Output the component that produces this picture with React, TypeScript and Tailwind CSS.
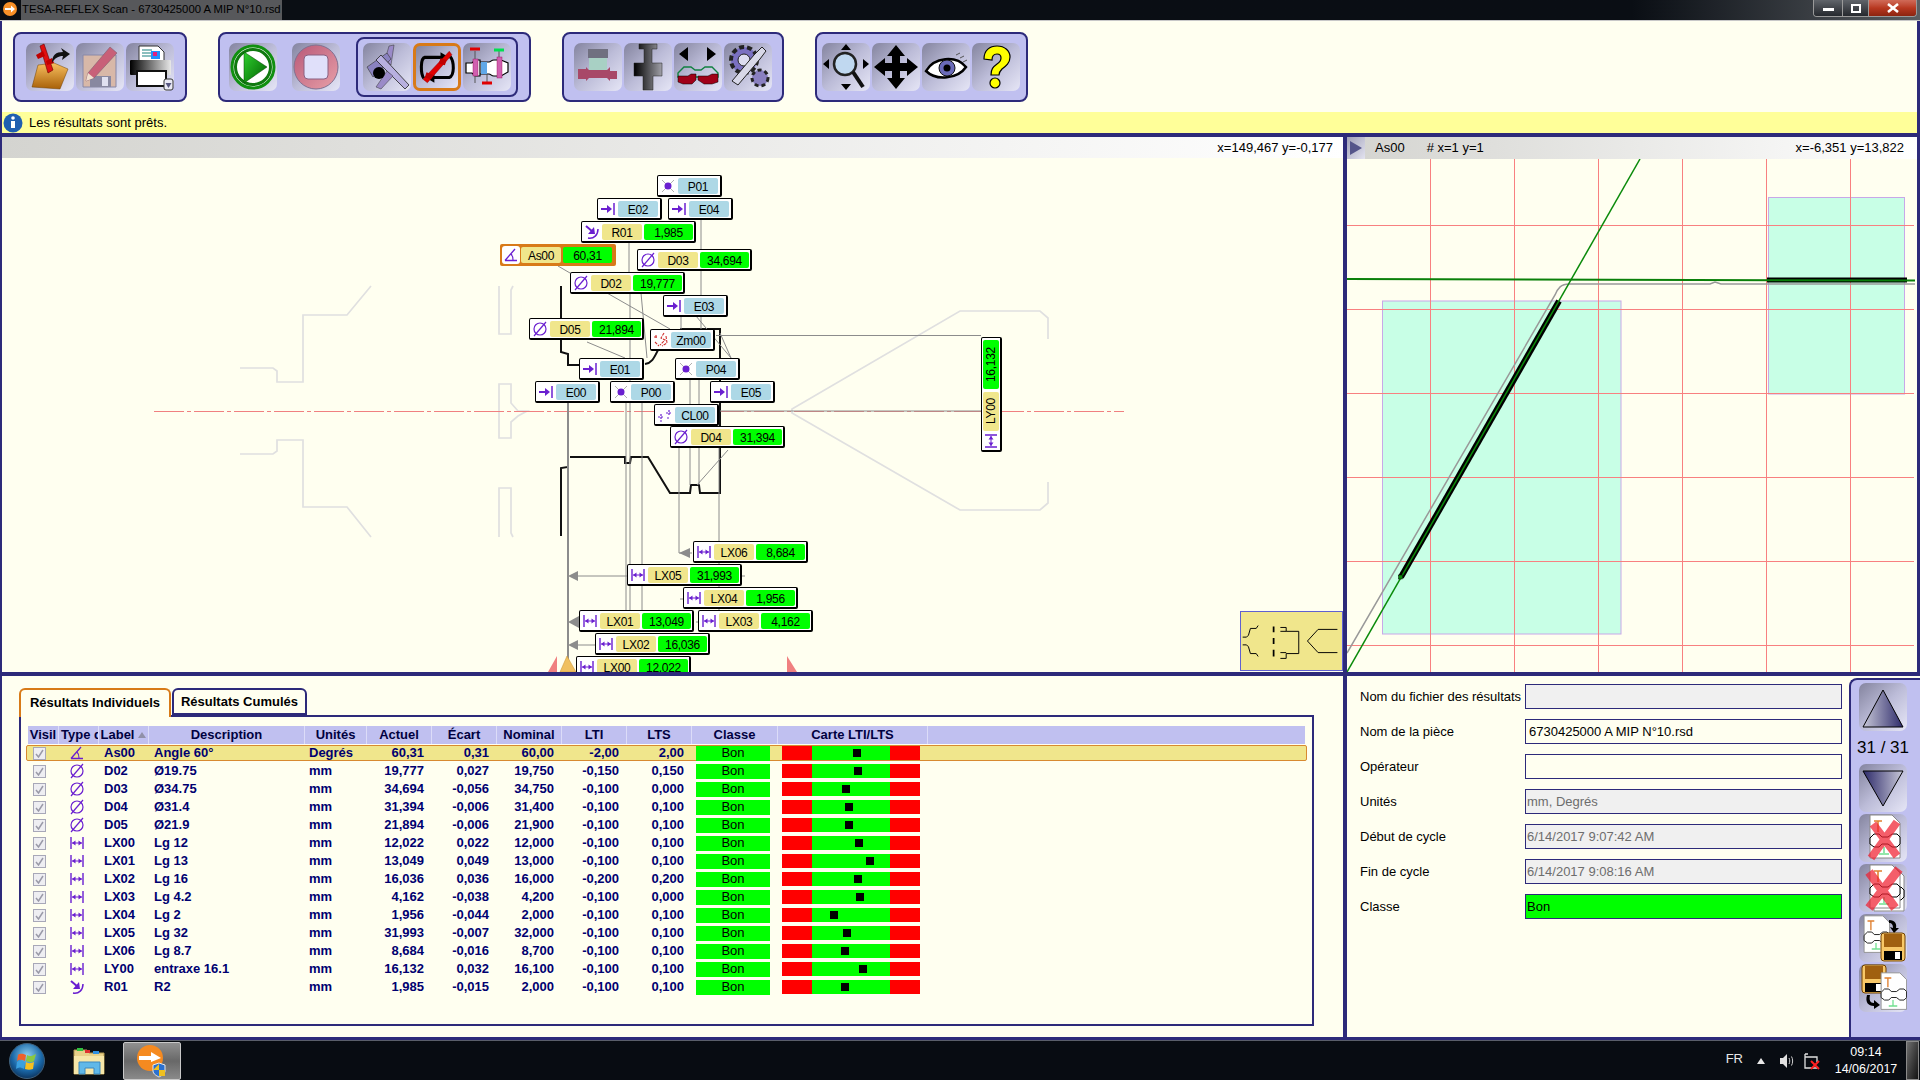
import React from "react";

const navy = "border-[#2d2a7a]";
const btn = "flex h-[48px] w-[48px] flex-none items-center justify-center rounded-[7px] bg-linear-to-br from-[#84849f] via-[#bcbcd8] to-[#e6e6f6]";

type IconKind = "edge" | "pt" | "dia" | "len" | "arc" | "ang" | "zone" | "cl";

function MeasureIcon({ kind, size = 16 }: { kind: IconKind; size?: number }) {
   const c = "#6a1fd0";
   return (
      <svg width={size} height={size} viewBox="0 0 16 16" fill="none">
         {kind === "edge" && (
            <>
               <path d="M1 8H8" stroke={c} strokeWidth="2" />
               <path d="M7 4L12 8L7 12Z" fill={c} />
               <path d="M14 2V14" stroke={c} strokeWidth="1.5" />
            </>
         )}
         {kind === "pt" && (
            <>
               <path d="M2 2L14 14M14 2L2 14" stroke="#b0b0b0" strokeWidth="1" />
               <circle cx="8" cy="8" r="3.5" fill={c} />
            </>
         )}
         {kind === "dia" && (
            <>
               <circle cx="8" cy="8" r="6" stroke={c} strokeWidth="1.2" />
               <path d="M2 15L14 1" stroke={c} strokeWidth="1.2" />
            </>
         )}
         {kind === "len" && (
            <>
               <path d="M2 2V14M14 2V14" stroke={c} strokeWidth="1.4" />
               <path d="M3 8H13" stroke={c} strokeWidth="1" />
               <path d="M3 8L6.5 5.5V10.5Z M13 8L9.5 5.5V10.5Z" fill={c} />
            </>
         )}
         {kind === "arc" && (
            <>
               <path d="M2 2L9 8" stroke={c} strokeWidth="2" />
               <path d="M4 10L11 10L10 3Z" fill={c} />
               <path d="M4 14C10 15 14 11 14 5" stroke={c} strokeWidth="1.5" />
            </>
         )}
         {kind === "ang" && (
            <>
               <path d="M2 13.5H14M2 13.5L12 2" stroke={c} strokeWidth="1.3" />
               <path d="M8 7C10 9 10 11 10 13" stroke={c} strokeWidth="1.1" />
            </>
         )}
         {kind === "zone" && (
            <path d="M1 5H5M3 3V7M11 1L8 6L12 8L7 13M13 4L14 11L9 14M2 10L6 14" stroke="#d03030" strokeWidth="1.1" strokeDasharray="3 1" />
         )}
         {kind === "cl" && (
            <path d="M1 10H7M4 7V13M9 6H15M12 3V9M3 14H6M10 11H13" stroke={c} strokeWidth="1.2" strokeDasharray="2 1" />
         )}
      </svg>
   );
}

const tags: { pos: string; name: string; value?: string; icon: IconKind; sel?: boolean }[] = [
   { pos: "left-[655px] top-[17px]", name: "P01", icon: "pt" },
   { pos: "left-[595px] top-[40px]", name: "E02", icon: "edge" },
   { pos: "left-[666px] top-[40px]", name: "E04", icon: "edge" },
   { pos: "left-[579px] top-[63px]", name: "R01", value: "1,985", icon: "arc" },
   { pos: "left-[498px] top-[86px]", name: "As00", value: "60,31", icon: "ang", sel: true },
   { pos: "left-[635px] top-[91px]", name: "D03", value: "34,694", icon: "dia" },
   { pos: "left-[568px] top-[114px]", name: "D02", value: "19,777", icon: "dia" },
   { pos: "left-[661px] top-[137px]", name: "E03", icon: "edge" },
   { pos: "left-[527px] top-[160px]", name: "D05", value: "21,894", icon: "dia" },
   { pos: "left-[648px] top-[171px]", name: "Zm00", icon: "zone" },
   { pos: "left-[577px] top-[200px]", name: "E01", icon: "edge" },
   { pos: "left-[673px] top-[200px]", name: "P04", icon: "pt" },
   { pos: "left-[533px] top-[223px]", name: "E00", icon: "edge" },
   { pos: "left-[608px] top-[223px]", name: "P00", icon: "pt" },
   { pos: "left-[708px] top-[223px]", name: "E05", icon: "edge" },
   { pos: "left-[652px] top-[246px]", name: "CL00", icon: "cl" },
   { pos: "left-[668px] top-[268px]", name: "D04", value: "31,394", icon: "dia" },
   { pos: "left-[691px] top-[383px]", name: "LX06", value: "8,684", icon: "len" },
   { pos: "left-[625px] top-[406px]", name: "LX05", value: "31,993", icon: "len" },
   { pos: "left-[681px] top-[429px]", name: "LX04", value: "1,956", icon: "len" },
   { pos: "left-[577px] top-[452px]", name: "LX01", value: "13,049", icon: "len" },
   { pos: "left-[696px] top-[452px]", name: "LX03", value: "4,162", icon: "len" },
   { pos: "left-[593px] top-[475px]", name: "LX02", value: "16,036", icon: "len" },
   { pos: "left-[574px] top-[498px]", name: "LX00", value: "12,022", icon: "len" },
];

const rows = [
   ["As00", "Angle 60°", "Degrés", "60,31", "0,31", "60,00", "-2,00", "2,00", "ang", 71],
   ["D02", "Ø19.75", "mm", "19,777", "0,027", "19,750", "-0,150", "0,150", "dia", 72],
   ["D03", "Ø34.75", "mm", "34,694", "-0,056", "34,750", "-0,100", "0,000", "dia", 60],
   ["D04", "Ø31.4", "mm", "31,394", "-0,006", "31,400", "-0,100", "0,100", "dia", 63],
   ["D05", "Ø21.9", "mm", "21,894", "-0,006", "21,900", "-0,100", "0,100", "dia", 63],
   ["LX00", "Lg 12", "mm", "12,022", "0,022", "12,000", "-0,100", "0,100", "len", 73],
   ["LX01", "Lg 13", "mm", "13,049", "0,049", "13,000", "-0,100", "0,100", "len", 84],
   ["LX02", "Lg 16", "mm", "16,036", "0,036", "16,000", "-0,200", "0,200", "len", 72],
   ["LX03", "Lg 4.2", "mm", "4,162", "-0,038", "4,200", "-0,100", "0,000", "len", 74],
   ["LX04", "Lg 2", "mm", "1,956", "-0,044", "2,000", "-0,100", "0,100", "len", 48],
   ["LX05", "Lg 32", "mm", "31,993", "-0,007", "32,000", "-0,100", "0,100", "len", 61],
   ["LX06", "Lg 8.7", "mm", "8,684", "-0,016", "8,700", "-0,100", "0,100", "len", 59],
   ["LY00", "entraxe 16.1", "mm", "16,132", "0,032", "16,100", "-0,100", "0,100", "len", 77],
   ["R01", "R2", "mm", "1,985", "-0,015", "2,000", "-0,100", "0,100", "arc", 59],
] as const;

const cols = "grid grid-cols-[31px_40px_50px_156px_62px_65px_65px_65px_65px_65px_86px_150px_1fr]";

const fields = [
   { label: "Nom du fichier des résultats", value: "", box: "bg-[#f0f0f0] text-[#6d6d6d]" },
   { label: "Nom de la pièce", value: "6730425000 A MIP N°10.rsd", box: "bg-[#fffff0] text-black pl-[3px]" },
   { label: "Opérateur", value: "", box: "bg-[#fffff0] text-black" },
   { label: "Unités", value: "mm, Degrés", box: "bg-[#f0f0f0] text-[#6d6d6d]" },
   { label: "Début de cycle", value: "6/14/2017 9:07:42 AM", box: "bg-[#f0f0f0] text-[#6d6d6d]" },
   { label: "Fin de cycle", value: "6/14/2017 9:08:16 AM", box: "bg-[#f0f0f0] text-[#6d6d6d]" },
   { label: "Classe", value: "Bon", box: "bg-[#00ff00] text-black" },
];

function Tag({ pos, name, value, icon, sel }: (typeof tags)[number]) {
   return (
      <div
         className={`absolute flex h-[22px] items-center rounded-[2px] ${pos} ${
            sel ? "bg-[#d87a18] pl-[2px] pr-[4px]" : "border border-r-2 border-b-2 border-black bg-white pl-[1px] pt-[1px]"
         } ${!sel && value ? "pr-[1px]" : ""} ${!sel && !value ? "pr-[2px]" : ""}`}
      >
         <div className={`flex h-[18px] w-[18px] items-center justify-center rounded-[3px] ${sel ? "bg-white" : ""}`}>
            <MeasureIcon kind={icon} />
         </div>
         <div
            className={`ml-[1px] flex h-[16px] w-[40px] items-center justify-center rounded-[2px] pt-[1px] ${
               value ? "bg-[#f0e68c]" : "bg-[#add8e6]"
            }`}
         >
            {name}
         </div>
         {value && (
            <div className="ml-[2px] flex h-[16px] w-[49px] items-center justify-center rounded-[2px] bg-[#00ff00] pt-[1px]">{value}</div>
         )}
      </div>
   );
}

function Drawing() {
   return (
      <svg className="absolute inset-0 h-full w-full" viewBox="2 158 1341 514" fill="none">
         {/* ghost profile */}
         <g stroke="#e0e0e0" strokeWidth="1.7">
            <path d="M240 368H273L277 371V382H303V315H347L371 286" />
            <path d="M240 454H273L277 451V440H303V507H347L371 537" />
            <path d="M499 286V334H511V290L513 286" />
            <path d="M513 537L511 533V488H499V537" />
            <path d="M499 384H511V403L518 411H527L518 416L511 422V438H499Z" />
            <path d="M1048 339V318L1040 311H960L792 409V413L960 510H1040L1048 503V482" />
         </g>
         <path d="M154 411.5H1124" stroke="#f08080" strokeWidth="1" strokeDasharray="30 3 4 3" />
         {/* black profile */}
         <g stroke="#111" strokeWidth="2">
            <path d="M561 286V352L568 354V365H579" />
            <path d="M645 364C652 363 654 358 658 350" />
            <path d="M680 329H720V493H700L699 485H691L690 493H670L648 457H631L630 463H625L625 457H570" />
            <path d="M561 536V468L568 467V457" />
         </g>
         {/* construction lines */}
         <g stroke="#8c8c8c" strokeWidth="1">
            <path d="M568 403V672" strokeWidth="2" />
            <path d="M626 403V610M630 293V610M642 403V610M679 448V553H692M690 380V485M699 380V485M719 448V610M701 220V295" />
            <path d="M629 243V272M701 316V329" />
            <path d="M641 293L647 358M607 293L670 329M587 342L625 358M558 266L570 273M696 316L731 358M720 333L731 358M681 316V329M728 450L697 485" />
            <path d="M716 335.5H981M720 411H981" />
            <path d="M578 576H627M578 622H579M578 645H595M683 599H680M698 622H696M742 576H745" />
         </g>
         <g fill="#8c8c8c">
            <path d="M568 576L578 571V581Z" />
            <path d="M568 622L579 616V628Z" />
            <path d="M568 645L578 640V650Z" />
            <path d="M679 553L690 548V558Z" />
         </g>
         <path d="M548 672L557 656V672Z" fill="#f08080" />
         <path d="M560 672L567 656L576 672Z" fill="#f0c060" stroke="#c89030" strokeWidth="0.5" />
         <path d="M787 656V672H797Z" fill="#f08080" />
      </svg>
   );
}

function Plot() {
   return (
      <svg className="h-full w-full" viewBox="1347 159 570 513" fill="none">
         <rect x="1382.5" y="301" width="238.5" height="333" fill="#c8ffe6" stroke="#c8a8e8" />
         <rect x="1768.5" y="197.5" width="136" height="196.5" fill="#c8ffe6" stroke="#c8a8e8" />
         <g stroke="#f88080" strokeWidth="1">
            <path d="M1430.5 159V672M1514.5 159V672M1598.5 159V672M1682.5 159V672M1766.5 159V672M1850.5 159V672" />
            <path d="M1347 225.5H1914M1347 309.5H1914M1347 393.5H1914M1347 477.5H1914M1347 561.5H1914M1347 645.5H1914" />
         </g>
         <path d="M1347 653L1555 295C1558 288 1561 284 1569 284H1710L1715 282L1721 284H1915" stroke="#999" strokeWidth="1.5" />
         <path d="M1401 577L1559 301" stroke="#000" strokeWidth="6" />
         <path d="M1767 280H1907" stroke="#000" strokeWidth="5" />
         <path d="M1347 672L1640 159" stroke="#0a8a0a" strokeWidth="1.5" />
         <path d="M1347 279L1915 280.5" stroke="#0a800a" strokeWidth="2" />
         <rect x="1398.5" y="575" width="4" height="4" fill="#0a8a0a" stroke="#000" strokeWidth="0.5" />
      </svg>
   );
}

const g = (id: string, a: string, b: string, x2 = 0, y2 = 1) => (
   <linearGradient id={id} x1="0" y1="0" x2={x2} y2={y2}>
      <stop offset="0" stopColor={a} />
      <stop offset="1" stopColor={b} />
   </linearGradient>
);

function Tool({ children }: { children: React.ReactNode }) {
   return (
      <svg width="48" height="48" viewBox="0 0 48 48" fill="none">
         {children}
      </svg>
   );
}

const OpenIcon = () => (
   <Tool>
      <defs>{g("fo", "#f8c060", "#a86008")}</defs>
      <path d="M12 22L28 20L42 26L34 46L6 44Z" fill="url(#fo)" stroke="#704000" strokeWidth="0.5" />
      <path d="M14 3L18 1L27 27L22 30Z" fill="#e01010" stroke="#600" strokeWidth="0.6" />
      <path d="M10 12L17 8L19 13L12 16Z M20 18L26 15L28 20L21 22Z" fill="#c00000" />
      <path d="M26 20C26 12 30 9 37 9L35 5L44 11L36 17L37 13C32 13 29 15 26 20Z" fill="#111" />
   </Tool>
);
const SaveEditIcon = () => (
   <Tool>
      <path d="M7 12H40V44H7Z" fill="#d8b8a8" stroke="#8888a8" />
      <path d="M14 33H35V44H14Z" fill="#8888a0" />
      <path d="M26 34H32V43H26Z" fill="#e0e0f0" />
      <path d="M12 30L34 4L41 10L18 35L10 38Z" fill="#c86078" stroke="#806070" strokeWidth="0.6" />
      <path d="M10 38L12 30L18 35Z" fill="#f0e0d0" />
   </Tool>
);
const PrintIcon = () => (
   <Tool>
      <defs>{g("pr", "#000000", "#e8e8e8", 1, 0)}</defs>
      <path d="M13 3H32L38 9V24H13Z" fill="#fff" stroke="#333" />
      <path d="M16 7H26M16 10H26M16 13H26" stroke="#6aa" strokeWidth="1.5" />
      <rect x="25" y="8" width="9" height="8" fill="#1e90ff" />
      <rect x="27" y="9" width="4" height="4" fill="#e02080" />
      <rect x="4" y="17" width="41" height="15" rx="1" fill="url(#pr)" />
      <rect x="11" y="28" width="29" height="15" fill="#fff" stroke="#111" strokeWidth="2" />
      <rect x="38" y="36" width="9" height="11" rx="2" fill="#e8e8f4" stroke="#333" />
      <path d="M39.5 40H45.5L42.5 45Z" fill="#555580" />
   </Tool>
);
const PlayIcon = () => (
   <Tool>
      <defs>{g("pl", "#30d030", "#006000", 1, 1)}</defs>
      <circle cx="24" cy="24" r="21" fill="#fff" stroke="#109010" strokeWidth="3" />
      <circle cx="24" cy="24" r="17.5" stroke="#107a10" strokeWidth="3" />
      <path d="M15 9L38 24L15 40Z" fill="url(#pl)" stroke="#004000" strokeWidth="0.5" />
   </Tool>
);
const StopIcon = () => (
   <Tool>
      <defs>{g("st", "#b85878", "#e8a0a8", 1, 1)}</defs>
      <circle cx="24" cy="24" r="22" fill="url(#st)" stroke="#807090" />
      <rect x="12" y="12" width="24" height="24" rx="4" fill="#e0e0fa" stroke="#8a6080" />
   </Tool>
);
const CaliperIcon = () => (
   <Tool>
      <path d="M26 3L31 2L28 22L22 17Z" fill="#9a8ac8" stroke="#333" strokeWidth="0.5" />
      <path d="M4 24L24 10L28 16L10 34Z" fill="#8a82c0" stroke="#333" strokeWidth="0.6" />
      <path d="M18 12L46 42L42 46L13 17Z" fill="#b8b0e0" stroke="#222" strokeWidth="0.8" />
      <path d="M24 28L13 44L18 46L30 33Z" fill="#9a8ac8" stroke="#333" strokeWidth="0.5" />
      <circle cx="16" cy="30" r="6" fill="#000" />
   </Tool>
);
const CycleIcon = () => (
   <Tool>
      <path d="M9 37C5 32 5 14 10 13H30" stroke="#000" strokeWidth="3.5" />
      <path d="M28 7L38 13L28 19Z" fill="#000" />
      <path d="M39 12C44 18 44 34 38 36H19" stroke="#000" strokeWidth="3.5" />
      <path d="M21 30L11 36L21 42Z" fill="#000" />
      <path d="M8 38L38 6L41 10L13 42Z" fill="#e00000" stroke="#800" strokeWidth="0.5" />
      <path d="M12 30L20 33L17 38L10 36Z M28 14L35 16L33 22L26 20Z" fill="#c00000" />
   </Tool>
);
const PartIcon = () => (
   <Tool>
      <path d="M3 20H9L12 17H17V33H12L9 30H3Z M17 19H26C28 19 28 17 31 17H38L45 20V29L38 33H31C28 33 28 31 26 31H17" fill="#fff" stroke="#000" strokeWidth="1.2" />
      <rect x="10" y="16" width="5" height="17" fill="#d060b0" stroke="#905" strokeWidth="0.4" />
      <rect x="18" y="19" width="6" height="12" fill="#60a8e8" />
      <rect x="34" y="14" width="5" height="21" fill="#d060b0" stroke="#905" strokeWidth="0.4" />
      <path d="M12 8V16M36 8V14M12 33V40M24 31V40" stroke="#555" strokeWidth="1" />
      <path d="M7 6H17" strokeWidth="3" stroke="#e00000" />
      <path d="M31 7H41" strokeWidth="3" stroke="#00e050" />
      <path d="M19 40H29" strokeWidth="3" stroke="#e00000" />
   </Tool>
);
const FeatureIcon = () => (
   <Tool>
      <rect x="14" y="6" width="20" height="9" fill="#707080" />
      <rect x="15" y="15" width="18" height="18" fill="#a8d0c4" />
      <path d="M4 26H12V24L15 27H33L36 24V28H43V36H36V38L33 35H15L12 38V36H4Z" fill="#a84868" />
   </Tool>
);
const ProbeIcon = () => (
   <Tool>
      <defs>{g("pb", "#000000", "#a0a0a8", 1, 0)}</defs>
      <path d="M15 1H33V6H28V20H38V33H29V47H19V33H10V20H20V6H15Z" fill="url(#pb)" stroke="#222" strokeWidth="0.5" />
   </Tool>
);
const MoveIcon = () => (
   <Tool>
      <path d="M5 11L14 4V18Z M42 11L33 4V18Z" fill="#000" />
      <path d="M4 30L10 24H17L21 27H27L31 24H38L44 30V34H4Z" stroke="#108040" strokeWidth="1.4" />
      <path d="M4 33H14L17 31H22V37L18 41H9L4 39Z M24 33H34L38 31H44V39L38 41H30L24 37Z" fill="#a00018" stroke="#000" strokeWidth="0.5" />
   </Tool>
);
const GearIcon = () => (
   <Tool>
      <circle cx="20" cy="17" r="13" fill="#7a70c0" stroke="#222" strokeWidth="4" strokeDasharray="5 3" />
      <circle cx="20" cy="17" r="6" fill="#dcdcf0" stroke="#222" />
      <circle cx="36" cy="35" r="8" fill="#8a80c0" stroke="#222" strokeWidth="3" strokeDasharray="4 3" />
      <path d="M38 4L42 8L36 16L14 42L8 38L30 12Z" fill="#d8d8e8" stroke="#222" />
   </Tool>
);
const ZoomIcon = () => (
   <Tool>
      <path d="M24 1L19 7H29Z M24 47L19 41H29Z M1 21L7 16V26Z" fill="#000" />
      <path d="M47 21L41 16V26Z" fill="#000" />
      <circle cx="23" cy="21" r="11" fill="#c0d8f0" stroke="#222" strokeWidth="2.5" />
      <path d="M31 29L41 44" stroke="#111" strokeWidth="4" />
   </Tool>
);
const PanIcon = () => (
   <Tool>
      <path d="M24 2L33 13H28V20H35V15L46 24L35 33V28H28V35H33L24 46L15 35H20V28H13V33L2 24L13 15V20H20V13H15Z" fill="#000" />
   </Tool>
);
const EyeIcon = () => (
   <Tool>
      <path d="M4 28C12 14 34 12 44 24C36 36 14 38 4 28Z" fill="#fff" stroke="#000" strokeWidth="2.5" />
      <circle cx="25" cy="25" r="8" fill="#6a6ab8" stroke="#111" />
      <circle cx="25" cy="25" r="3.5" fill="#000" />
      <path d="M34 12L38 10M38 15L42 13M41 19L45 17" stroke="#555" />
   </Tool>
);
const HelpIcon = () => (
   <Tool>
      <path d="M12 16C12 7 18 3 25 3C33 3 38 8 38 14C38 20 34 23 30 26C28 28 27 29 27 32H19C19 26 21 24 25 21C28 19 29 17 29 15C29 12 27 11 25 11C22 11 20 13 20 17Z" fill="#ffff00" stroke="#000" strokeWidth="1.2" />
      <circle cx="23" cy="40" r="5" fill="#ffff00" stroke="#000" strokeWidth="1.2" />
   </Tool>
);
const UpIcon = () => (
   <Tool>
      <defs>{g("tr", "#c8c8d8", "#2d2a6a", 1, 0)}</defs>
      <path d="M24 7L44 44H4Z" fill="url(#tr)" stroke="#000" strokeLinejoin="round" strokeWidth="1" />
   </Tool>
);
const DownIcon = () => (
   <Tool>
      <defs>{g("dn", "#2d2a6a", "#c8c8d8", 1, 0)}</defs>
      <path d="M4 7H44L24 42Z" fill="url(#dn)" stroke="#000" strokeLinejoin="round" strokeWidth="1" />
   </Tool>
);
const DocShape = ({ x = 0, y = 0, s = 1 }: { x?: number; y?: number; s?: number }) => (
   <g transform={`translate(${x} ${y}) scale(${s})`}>
      <path d="M6 1H28L36 9V44H6Z" fill="#fff" stroke="#888" />
      <path d="M10 7H18M14 7V18" stroke="#e08030" strokeWidth="1.6" />
      <path d="M6 24L10 20H15L18 23H24L28 20H33L36 23V30L33 33H28L24 30H18L15 33H10L6 30Z" fill="#fff" stroke="#000" />
      <path d="M20 33V39M15 40H25" stroke="#70e090" strokeWidth="1.5" />
   </g>
);
const DeleteDocIcon = () => (
   <Tool>
      <DocShape x={5} />
      <path d="M14 10L38 42M38 8L12 44" stroke="#f02030" strokeWidth="8" opacity="0.72" />
   </Tool>
);
const DeleteAllIcon = () => (
   <Tool>
      <DocShape x={9} y={3} />
      <DocShape x={5} />
      <path d="M10 8L36 44M40 5L10 44" stroke="#f02030" strokeWidth="9" opacity="0.72" />
   </Tool>
);
const Floppy = ({ x, y }: { x: number; y: number }) => (
   <g transform={`translate(${x} ${y})`}>
      <rect width="24" height="28" rx="3" fill="#f8c868" stroke="#704000" />
      <rect x="3" y="1" width="18" height="13" fill="#a06010" />
      <rect x="3" y="18" width="18" height="9" fill="#000" />
      <rect x="14" y="19" width="5" height="7" fill="#fff" />
   </g>
);
const SaveDocIcon = () => (
   <Tool>
      <DocShape x={0} y={1} s={0.85} />
      <path d="M30 6C36 6 38 10 37 14L40 14L35 19L31 13L34 14C34 11 33 9 30 9Z" fill="#000" />
      <Floppy x={22} y={19} />
   </Tool>
);
const LoadDocIcon = () => (
   <Tool>
      <Floppy x={3} y={1} />
      <DocShape x={17} y={8} s={0.85} />
      <path d="M8 31C6 38 9 42 15 42L15 45L21 41L15 36L15 39C11 39 10 36 11 31Z" fill="#000" />
   </Tool>
);

function Minimap() {
   return (
      <div className="absolute bottom-[1px] right-0 h-[60px] w-[103px] border border-[#6060d0] bg-[#f0e68c]">
         <svg className="h-full w-full" viewBox="0 0 103 60" fill="none" stroke="#000" strokeWidth="1">
            <path d="M1 26H5L7 24L9 17H15L17 14M1 34H5L7 36L9 43H15L17 46" />
            <path d="M33 15V21M33 27V33M33 39V46" strokeWidth="1.8" />
            <path d="M40 16H46V20H59V43H46V48H40M40 20H46M40 42H46" />
            <path d="M99 18H79L68 30L79 42H99" />
         </svg>
      </div>
   );
}

export default function App() {
   return (
      <div className="flex h-[1080px] w-[1920px] flex-col overflow-hidden bg-[#080c12] text-[13px] text-black [font-family:'Liberation_Sans',Arial,sans-serif]">
         {/* title bar */}
         <div className="flex h-[21px] flex-none items-start border-b border-[#c8c8c8] bg-linear-to-r from-[#0a0e14] from-85% to-[#5a5e62]">
            <svg className="ml-[2px] mt-[1px]" width="16" height="16" viewBox="0 0 16 16">
               <circle cx="8" cy="8" r="7" fill="#f89028" />
               <path d="M3 7H9V4.5L13 8L9 11.5V9H3Z" fill="#fff" />
            </svg>
            <div className="ml-[3px] h-[20px] bg-[#8a8a8a]/60 px-[1px] text-[11.3px] leading-[19px] text-black">
               TESA-REFLEX Scan - 6730425000 A MIP N°10.rsd
            </div>
            <div className="ml-auto mr-[3px] flex h-[17px] overflow-hidden rounded-b-[4px] border border-t-0 border-[#9a9a9a]">
               <div className="flex w-[29px] items-center justify-center border-r border-[#9a9a9a] bg-linear-to-b from-[#60646a] to-[#26292e]">
                  <div className="mt-[2px] h-[3px] w-[11px] bg-white" />
               </div>
               <div className="flex w-[26px] items-center justify-center border-r border-[#9a9a9a] bg-linear-to-b from-[#60646a] to-[#26292e]">
                  <div className="h-[9px] w-[10px] border-2 border-white" />
               </div>
               <div className="flex w-[47px] items-center justify-center bg-linear-to-b from-[#d06a58] via-[#b83820] to-[#8c2410]">
                  <svg width="12" height="10" viewBox="0 0 12 10">
                     <path d="M1 1L11 9M11 1L1 9" stroke="#fff" strokeWidth="2.6" />
                  </svg>
               </div>
            </div>
         </div>

         <div className={`flex min-h-0 flex-1 flex-col border-l-2 ${navy} bg-[#fffff0]`}>
            {/* toolbar */}
            <div className={`flex h-[91px] flex-none items-start gap-[31px] border-r-[3px] ${navy} pl-[11px] pt-[11px]`}>
               <div className={`flex h-[70px] items-center gap-[2px] rounded-[8px] border-2 ${navy} bg-[#c0c0f0] px-[11px]`}>
                  <div className={btn}><OpenIcon /></div>
                  <div className={btn}><SaveEditIcon /></div>
                  <div className={btn}><PrintIcon /></div>
               </div>
               <div className={`flex h-[70px] items-center rounded-[8px] border-2 ${navy} bg-[#c0c0f0] pl-[9px] pr-[11px]`}>
                  <div className={btn}><PlayIcon /></div>
                  <div className={`${btn} ml-[15px]`}><StopIcon /></div>
                  <div className={`ml-[16px] flex h-[60px] items-center gap-[2px] rounded-[8px] border-2 ${navy} px-[5px]`}>
                     <div className={btn}><CaliperIcon /></div>
                     <div className={`${btn} border-[3px] border-[#d87a18]`}><CycleIcon /></div>
                     <div className={btn}><PartIcon /></div>
                  </div>
               </div>
               <div className={`flex h-[70px] items-center gap-[2px] rounded-[8px] border-2 ${navy} bg-[#c0c0f0] px-[10px]`}>
                  <div className={btn}><FeatureIcon /></div>
                  <div className={btn}><ProbeIcon /></div>
                  <div className={btn}><MoveIcon /></div>
                  <div className={btn}><GearIcon /></div>
               </div>
               <div className={`flex h-[70px] items-center gap-[2px] rounded-[8px] border-2 ${navy} bg-[#c0c0f0] pl-[5px] pr-[6px]`}>
                  <div className={btn}><ZoomIcon /></div>
                  <div className={btn}><PanIcon /></div>
                  <div className={btn}><EyeIcon /></div>
                  <div className={btn}><HelpIcon /></div>
               </div>
            </div>

            {/* info bar */}
            <div className={`flex h-[25px] flex-none items-start border-b-4 border-r-[3px] ${navy} bg-[#ffff99]`}>
               <svg className="ml-[1px] mt-[1px]" width="20" height="20" viewBox="0 0 20 20">
                  <circle cx="10" cy="10" r="9.5" fill="#1f5fb0" />
                  <circle cx="10" cy="5" r="1.8" fill="#fff" />
                  <path d="M8 8H12V15H8Z" fill="#fff" />
               </svg>
               <span className="ml-[6px] leading-[21px]">Les résultats sont prêts.</span>
            </div>

            {/* diagram and plot */}
            <div className={`flex h-[539px] flex-none border-b-4 border-r-[3px] ${navy}`}>
               <div className="flex w-[1341px] flex-none flex-col">
                  <div className="flex h-[21px] flex-none items-center justify-end bg-linear-to-r from-[#d4d4d0] to-white pr-[10px]">
                     x=149,467 y=-0,177
                  </div>
                  <div className="relative min-h-0 flex-1 overflow-hidden text-[12px] tracking-[-0.3px]">
                     <Drawing />
                     {tags.map((t) => (
                        <Tag key={t.name} {...t} />
                     ))}
                     <div className="absolute left-[979px] top-[179px] flex h-[115px] w-[21px] flex-col items-center rounded-[2px] border border-r-2 border-b-2 border-black bg-white pt-[2px]">
                        <div className="flex h-[49px] w-[16px] flex-none rotate-180 items-center justify-center rounded-[2px] bg-[#00ff00] [writing-mode:vertical-rl]">
                           16,132
                        </div>
                        <div className="mt-[3px] flex h-[39px] w-[16px] flex-none rotate-180 items-center justify-center rounded-[2px] bg-[#f0e68c] [writing-mode:vertical-rl]">
                           LY00
                        </div>
                        <div className="mt-[2px] rotate-90">
                           <MeasureIcon kind="len" />
                        </div>
                     </div>
                     <Minimap />
                  </div>
               </div>
               <div className={`flex min-w-0 flex-1 flex-col border-l-4 ${navy}`}>
                  <div className="flex h-[22px] flex-none items-center bg-linear-to-r from-[#d4d4d0] to-white pr-[13px]">
                     <div className="flex h-full w-[18px] items-center justify-center bg-linear-to-br from-[#a0a0b8] to-[#e4e4f0]">
                        <svg width="14" height="16" viewBox="0 0 14 16">
                           <path d="M1 1L13 8L1 15Z" fill="#55558a" />
                        </svg>
                     </div>
                     <span className="ml-[10px]">As00</span>
                     <span className="ml-[22px]"># x=1 y=1</span>
                     <span className="ml-auto">x=-6,351 y=13,822</span>
                  </div>
                  <div className="min-h-0 flex-1">
                     <Plot />
                  </div>
               </div>
            </div>

            {/* results and details */}
            <div className="flex min-h-0 flex-1">
               <div className="w-[1341px] flex-none pl-[17px] pt-[12px]">
                  <div className="flex h-[27px] items-stretch font-bold">
                     <div className="relative z-10 -mb-[2px] flex w-[152px] items-center justify-center rounded-t-[6px] border-2 border-b-0 border-[#d87a18] bg-[#fffff0] pb-[2px]">
                        Résultats Individuels
                     </div>
                     <div className={`ml-[1px] flex w-[135px] items-center justify-center rounded-t-[6px] border-2 ${navy} bg-[#fffff0]`}>
                        Résultats Cumulés
                     </div>
                  </div>
                  <div className={`h-[311px] w-[1295px] border-2 ${navy} px-[7px] pt-[9px]`}>
                     <div className={`${cols} h-[18px] bg-[#c0c0f0] text-center font-bold text-[#000040]`}>
                        {["Visil", "Type d", "Label", "Description", "Unités", "Actuel", "Écart", "Nominal", "LTI", "LTS", "Classe", "Carte LTI/LTS", ""].map((h) => (
                           <div
                              key={h}
                              className={`flex items-center overflow-hidden whitespace-nowrap border-r border-[#dcdcf8] leading-[18px] last:border-r-0 ${
                                 h === "Type d" ? "justify-start pl-[2px]" : "justify-center"
                              }`}
                           >
                              {h}
                              {h === "Label" && (
                                 <svg className="ml-[4px]" width="8" height="6" viewBox="0 0 8 6">
                                    <path d="M4 0L8 6H0Z" fill="#9090a8" />
                                 </svg>
                              )}
                           </div>
                        ))}
                     </div>
                     {rows.map((r, i) => (
                        <div key={r[0]} className="-mx-[2px] h-[18px] py-[1px]">
                           <div
                              className={`${cols} h-[16px] grid-rows-[14px] items-center rounded-[2px] border px-[1px] font-bold leading-[14px] text-[#000070] ${
                                 i === 0 ? "border-[#d88a30] bg-[#f0e68c]" : "border-transparent"
                              }`}
                           >
                              <div className="flex justify-start pl-[5px]">
                                 <div className="flex h-[13px] w-[13px] items-center justify-center border border-[#a8a8b8] bg-[#eeeef2]">
                                    <svg width="9" height="9" viewBox="0 0 9 9" fill="none">
                                       <path d="M1 5L3.5 8L8 1" stroke="#9a9aa8" strokeWidth="1.5" />
                                    </svg>
                                 </div>
                              </div>
                              <div className="flex justify-center pr-[4px]">
                                 <MeasureIcon kind={r[8]} />
                              </div>
                              <div className="pl-[5px]">{r[0]}</div>
                              <div className="pl-[5px]">{r[1]}</div>
                              <div className="pl-[4px]">{r[2]}</div>
                              <div className="pr-[8px] text-right">{r[3]}</div>
                              <div className="pr-[8px] text-right">{r[4]}</div>
                              <div className="pr-[8px] text-right">{r[5]}</div>
                              <div className="pr-[8px] text-right">{r[6]}</div>
                              <div className="pr-[8px] text-right">{r[7]}</div>
                              <div className="ml-[4px] flex h-[15px] w-[74px] items-center justify-center bg-[#00ff00] font-normal text-black">Bon</div>
                              <div className="relative ml-[4px] flex h-[14px] w-[138px]">
                                 <div className="w-[30px] bg-[#ff0000]" />
                                 <div className="w-[78px] bg-[#00ff00]" />
                                 <div className="w-[30px] bg-[#ff0000]" />
                                 <div className="absolute top-[3px] h-[8px] w-[8px] bg-black" style={{ left: r[9] }} />
                              </div>
                              <div />
                           </div>
                        </div>
                     ))}
                  </div>
               </div>

               <div className={`flex min-w-0 flex-1 border-l-4 ${navy}`}>
                  <div className="flex w-[502px] flex-none flex-col gap-[10px] pl-[13px] pt-[8px]">
                     {fields.map((f) => (
                        <div key={f.label} className="flex h-[25px] items-center">
                           <div className="w-[165px] flex-none whitespace-nowrap">{f.label}</div>
                           <div className={`flex h-[25px] w-[317px] flex-none items-center border border-[#2d2a7a] pl-[1px] ${f.box}`}>{f.value}</div>
                        </div>
                     ))}
                  </div>
                  <div className={`mt-[2px] flex flex-1 flex-col rounded-tl-[8px] border-l-2 border-t-2 ${navy} bg-[#c0c0f0] pl-[8px] pt-[3px]`}>
                     <div className={btn}><UpIcon /></div>
                     <div className="flex h-[33px] w-[48px] items-center justify-center whitespace-nowrap text-[17px]">31 / 31</div>
                     <div className="flex flex-col gap-[2px]">
                        <div className={btn}><DownIcon /></div>
                        <div className={btn}><DeleteDocIcon /></div>
                        <div className={btn}><DeleteAllIcon /></div>
                        <div className={btn}><SaveDocIcon /></div>
                        <div className={btn}><LoadDocIcon /></div>
                     </div>
                  </div>
               </div>
            </div>
         </div>

         {/* taskbar */}
         <div className="flex h-[43px] flex-none items-center border-t-[3px] border-[#2d2a7a] bg-[#080c12]">
            <div className="flex h-full flex-1 items-center border-t border-[#5a5e6a]">
               <svg className="ml-[9px]" width="36" height="36" viewBox="0 0 36 36">
                  <defs>
                     <radialGradient id="orb" cx="0.5" cy="0.35" r="0.7">
                        <stop offset="0" stopColor="#8fd0f0" />
                        <stop offset="0.6" stopColor="#1a68a8" />
                        <stop offset="1" stopColor="#0a2a50" />
                     </radialGradient>
                  </defs>
                  <circle cx="18" cy="18" r="17.5" fill="url(#orb)" stroke="#40607a" />
                  <path d="M9 12C12 10 14 11 17 12L16 18C13 17 11 16 8 18Z" fill="#f0602a" />
                  <path d="M18 12C21 14 23 13 27 11L25 18C22 20 20 19 17 18Z" fill="#8ac840" />
                  <path d="M8 19C11 17 13 18 16 19L15 26C12 24 10 24 7 26Z" fill="#3aa0e0" />
                  <path d="M17 19C20 21 22 20 25 19L24 26C21 27 19 27 16 26Z" fill="#f8c020" />
               </svg>
               <svg className="ml-[28px]" width="32" height="32" viewBox="0 0 32 32">
                  <path d="M1 5H14L16 8H31V29H1Z" fill="#e8d088" stroke="#b09850" />
                  <path d="M4 3H10V6H4Z" fill="#30c040" />
                  <path d="M12 5H17V8H12Z" fill="#e03030" />
                  <path d="M20 6H26V9H20Z" fill="#3090e0" />
                  <path d="M1 11H31V29H1Z" fill="#f6e6a8" />
                  <path d="M6 17H27V29H21V23H12V29H6Z" fill="#60b8e8" stroke="#3a88c0" />
               </svg>
               <div className="ml-[18px] flex h-[38px] w-[58px] items-center justify-center rounded-[2px] border border-[#c8c8c8] bg-linear-to-b from-[#909090] via-[#686868] to-[#8a8a8a]">
                  <svg width="34" height="34" viewBox="0 0 34 34">
                     <circle cx="15" cy="14" r="13" fill="#f58a20" />
                     <path d="M4 12H16V8L26 14L16 18V16H4Z" fill="#fff" />
                     <path d="M18 21L24 19L30 21V27C30 30 26 32 24 33C22 32 18 30 18 27Z" fill="#2a70d0" stroke="#e8e8e8" />
                     <path d="M24 20V32H30V26H18" fill="#f0c020" />
                  </svg>
               </div>
               <div className="ml-auto text-[13px] text-[#e8e8e8]">
                  <span className="relative -top-[2px]">FR</span>
               </div>
               <svg className="ml-[14px]" width="8" height="6" viewBox="0 0 8 6">
                  <path d="M4 0L8 6H0Z" fill="#e8e8e8" />
               </svg>
               <svg className="ml-[14px]" width="16" height="16" viewBox="0 0 16 16" fill="none">
                  <path d="M1 5H4L8 1V15L4 11H1Z" fill="#e0e0e0" />
                  <path d="M10 5C11 7 11 9 10 11M12.5 3.5C14 6 14 10 12.5 12.5" stroke="#d0d0d0" />
               </svg>
               <svg className="ml-[8px]" width="18" height="18" viewBox="0 0 18 18" fill="none">
                  <path d="M2 2V16H14M2 2H5M2 5H14V10" stroke="#e0e0e0" strokeWidth="1.3" />
                  <path d="M8 9L16 17M16 9L8 17" stroke="#ff2020" strokeWidth="2" />
               </svg>
               <div className="ml-[10px] w-[70px] text-center text-[12.5px] leading-[17px] text-white">
                  <div>09:14</div>
                  <div>14/06/2017</div>
               </div>
               <div className="ml-[5px] mr-[1px] h-full w-[13px] border border-[#8a8a8a] bg-linear-to-br from-[#707070] to-[#141414]" />
            </div>
         </div>
      </div>
   );
}
